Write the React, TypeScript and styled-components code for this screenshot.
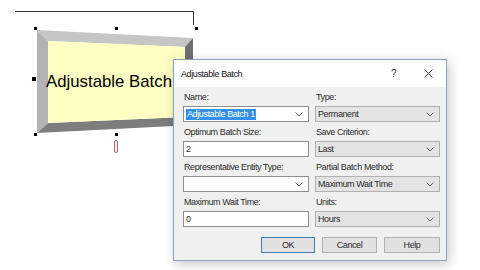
import React from 'react';
import styled, { createGlobalStyle } from 'styled-components';

const GlobalStyle = createGlobalStyle`
  body {
    margin: 0;
    background: #fff;
    font-family: "Liberation Sans", Arial, sans-serif;
  }
`;

const Chevron = () => (
  <svg width="8" height="5" viewBox="0 0 8 5">
    <polyline points="0.5,0.5 4,4 7.5,0.5" fill="none" stroke="#666" strokeWidth="1" />
  </svg>
);

const CloseIcon = () => (
  <svg width="9" height="9" viewBox="0 0 9 9">
    <path d="M0.5 0.5 L8.5 8.5 M8.5 0.5 L0.5 8.5" stroke="#333" strokeWidth="1" />
  </svg>
);

const ShapeLabel = styled.text`
  font-family: "Liberation Sans", Arial, sans-serif;
  font-size: 17px;
  fill: #000;
`;

// the model canvas: connector line, beveled batch shape, selection handles
const Diagram = () => (
  <svg width="200" height="160" viewBox="0 0 200 160">
    <path d="M15 11.5 H193.5 V25" fill="none" stroke="#333" strokeWidth="1" />
    <polygon points="37,30 193,38 185,47 48,41" fill="#c6c6c6" />
    <polygon points="37,30 48,41 48,123 37,133" fill="#b3b3b3" />
    <polygon points="193,38 193,125 185,117 185,47" fill="#6f6f6f" />
    <polygon points="37,133 48,123 185,117 193,125" fill="#7d7d7d" />
    <polygon points="48,41 185,47 185,117 48,123" fill="#ffffc4" />
    <ShapeLabel x="46" y="87" textLength="126" lengthAdjust="spacingAndGlyphs">
      Adjustable Batch
    </ShapeLabel>
    <rect x="34" y="27" width="3" height="3" fill="#000" />
    <rect x="115" y="27" width="3" height="3" fill="#000" />
    <rect x="195" y="27" width="3" height="3" fill="#000" />
    <rect x="32" y="77" width="4" height="4" fill="#000" />
    <rect x="34" y="133" width="3" height="3" fill="#000" />
    <rect x="115" y="133" width="3" height="3" fill="#000" />
    <rect x="114.5" y="140.5" width="3" height="12" rx="1.5" fill="#fbeeee" stroke="#a07070" strokeWidth="1" />
  </svg>
);

const Canvas = styled.div`
  position: relative;
  width: 480px;
  height: 270px;
  overflow: hidden;
  background: #fff;

  > svg {
    display: block;
  }
`;

const Dialog = styled.div`
  position: absolute;
  left: 173px;
  top: 59px;
  width: 274px;
  height: 202px;
  box-sizing: border-box;
  border: 1px solid #8aa3bd;
  background: #f0f0f0;
  box-shadow: 2px 3px 12px rgba(0, 0, 0, 0.22);
  display: flex;
  flex-direction: column;
  font-size: 9px;
  letter-spacing: -0.4px;
  color: #2a2a2a;
`;

const TitleBar = styled.div`
  height: 27px;
  background: #fff;
  display: flex;
  align-items: center;
  padding-left: 7px;
`;

const Title = styled.span`
  flex: 1;
  color: #111;
`;

const TitleButton = styled.div`
  width: 35px;
  height: 27px;
  display: flex;
  align-items: center;
  justify-content: center;
  font-size: 10px;
  color: #333;
`;

const Body = styled.div`
  padding: 0 6px 9px 9px;
  display: flex;
  flex-direction: column;
`;

const Grid = styled.div`
  display: grid;
  grid-template-columns: 126px 125px;
  column-gap: 6px;
`;

const Field = styled.div`
  display: flex;
  flex-direction: column;
`;

const Label = styled.div`
  height: 19px;
  display: flex;
  align-items: center;
  padding-left: 1px;
`;

const Control = styled.div<{ $select?: boolean }>`
  height: 16px;
  box-sizing: border-box;
  border: 1px solid ${({ $select }) => ($select ? '#b0b0b0' : '#8f8f8f')};
  background: ${({ $select }) => ($select ? '#e3e3e3' : '#fff')};
  display: flex;
  align-items: center;
  padding: 0 5px 0 2px;

  > svg {
    margin-left: auto;
  }
`;

const Selected = styled.span`
  background: #3390ea;
  color: #fff;
  padding: 0 1px;
  line-height: 11px;
`;

const ButtonRow = styled.div`
  margin-top: 10px;
  display: flex;
  justify-content: flex-end;
  gap: 7px;
`;

const Button = styled.div<{ $default?: boolean; $w: number }>`
  width: ${({ $w }) => $w}px;
  height: 16px;
  box-sizing: border-box;
  border: 1px solid ${({ $default }) => ($default ? '#3c7fb1' : '#b0b0b0')};
  background: #e1e1e1;
  display: flex;
  align-items: center;
  justify-content: center;
`;

export default function App() {
  return (
    <>
      <GlobalStyle />
      <Canvas>
        <Diagram />
        <Dialog>
          <TitleBar>
            <Title>Adjustable Batch</Title>
            <TitleButton>?</TitleButton>
            <TitleButton><CloseIcon /></TitleButton>
          </TitleBar>
          <Body>
            <Grid>
              <Field>
                <Label>Name:</Label>
                <Control><Selected>Adjustable Batch 1</Selected><Chevron /></Control>
              </Field>
              <Field>
                <Label>Type:</Label>
                <Control $select>Permanent<Chevron /></Control>
              </Field>
              <Field>
                <Label>Optimum Batch Size:</Label>
                <Control>2</Control>
              </Field>
              <Field>
                <Label>Save Criterion:</Label>
                <Control $select>Last<Chevron /></Control>
              </Field>
              <Field>
                <Label>Representative Entity Type:</Label>
                <Control><Chevron /></Control>
              </Field>
              <Field>
                <Label>Partial Batch Method:</Label>
                <Control $select>Maximum Wait Time<Chevron /></Control>
              </Field>
              <Field>
                <Label>Maximum Wait Time:</Label>
                <Control>0</Control>
              </Field>
              <Field>
                <Label>Units:</Label>
                <Control $select>Hours<Chevron /></Control>
              </Field>
            </Grid>
            <ButtonRow>
              <Button $default $w={54}>OK</Button>
              <Button $w={55}>Cancel</Button>
              <Button $w={56}>Help</Button>
            </ButtonRow>
          </Body>
        </Dialog>
      </Canvas>
    </>
  );
}
